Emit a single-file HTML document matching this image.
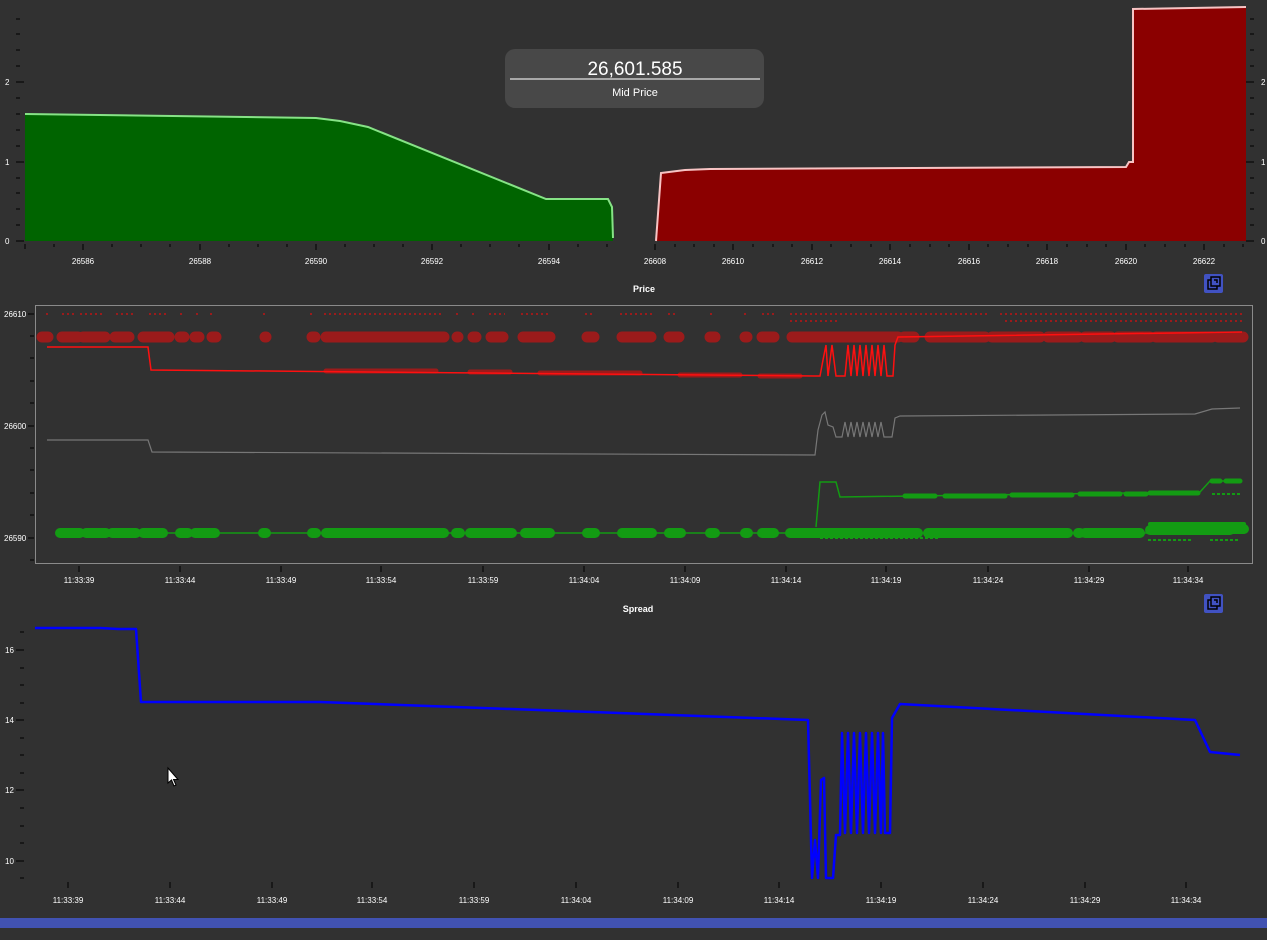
<!DOCTYPE html>
<html><head><meta charset="utf-8"><style>
html,body{margin:0;padding:0;background:#313131;overflow:hidden}
svg{display:block;font-family:"Liberation Sans",sans-serif}
</style></head><body>
<svg width="1267" height="940" viewBox="0 0 1267 940" xmlns="http://www.w3.org/2000/svg">
<defs>
<g id="icon">
<rect x="0" y="0" width="19" height="19" rx="2" fill="#4152c2"/>
<rect x="4" y="6" width="9" height="9" fill="none" stroke="#000" stroke-width="1.5"/>
<rect x="7" y="3" width="9" height="9" fill="#4152c2" stroke="#000" stroke-width="1.5"/>
<path d="M10 6h3v3" fill="none" stroke="#000" stroke-width="1.5"/>
</g>
</defs>
<rect width="1267" height="940" fill="#313131"/>

<!-- TOP DEPTH CHART -->
<g stroke="#000" stroke-width="1">
<path d="M16 241h8M16 225h4M16 209h4M16 193h4M16 178h4M16 162h8M16 146h4M16 130h4M16 114h4M16 98h4M16 82h8M16 66h4M16 50h4M16 34h4M16 19h4"/>
<path d="M1246 241h8M1250 225h4M1250 209h4M1250 193h4M1250 178h4M1246 162h8M1250 146h4M1250 130h4M1250 114h4M1250 98h4M1246 82h8M1250 66h4M1250 50h4M1250 34h4M1250 19h4"/>
</g>
<g fill="#fff" font-size="8">
<text x="5" y="244">0</text><text x="5" y="165">1</text><text x="5" y="85">2</text>
<text x="1261" y="244">0</text><text x="1261" y="165">1</text><text x="1261" y="85">2</text>
</g>
<path d="M25 241V114L316 118L340 121L368 127L546 199L608 199L612 207L613 241Z" fill="#006400"/>
<path d="M25 114L316 118L340 121L368 127L546 199L608 199L612 207L613 238" fill="none" stroke="#86e386" stroke-width="2"/>
<path d="M656 241L661 173L685 170L710 169L1126 167L1129 162L1133 162L1133 9L1246 7L1246 241Z" fill="#8b0000"/>
<path d="M656 241L661 173L685 170L710 169L1126 167L1129 162L1133 162L1133 9L1246 7" fill="none" stroke="#f7c4c4" stroke-width="2"/>
<g stroke="#000" stroke-width="1">
<path d="M25 244v5M54 244v3M83 244v6M112 244v3M141 244v3M170 244v3M200 244v6M229 244v3M258 244v3M287 244v3M316 244v6M345 244v3M374 244v3M403 244v3M432 244v6M461 244v3M490 244v3M519 244v3M549 244v6M578 244v3M607 244v3"/>
<path d="M655 244v6M675 244v3M694 244v3M714 244v3M733 244v6M753 244v3M773 244v3M792 244v3M812 244v6M831 244v3M851 244v3M871 244v3M890 244v6M910 244v3M930 244v3M949 244v3M969 244v6M988 244v3M1008 244v3M1028 244v3M1047 244v6M1067 244v3M1087 244v3M1106 244v3M1126 244v6M1145 244v3M1165 244v3M1185 244v3M1204 244v6M1224 244v3M1243 244v3"/>
</g>
<g fill="#fff" font-size="8" text-anchor="middle">
<text x="83" y="264">26586</text><text x="200" y="264">26588</text><text x="316" y="264">26590</text><text x="432" y="264">26592</text><text x="549" y="264">26594</text>
<text x="655" y="264">26608</text><text x="733" y="264">26610</text><text x="812" y="264">26612</text><text x="890" y="264">26614</text><text x="969" y="264">26616</text><text x="1047" y="264">26618</text><text x="1126" y="264">26620</text><text x="1204" y="264">26622</text>
</g>
<rect x="505" y="49" width="259" height="59" rx="10" fill="#484848"/>
<text x="635" y="75" fill="#fff" font-size="19" text-anchor="middle">26,601.585</text>
<path d="M510 79H760" stroke="#c8c8c8" stroke-width="1.5"/>
<text x="635" y="96" fill="#fff" font-size="11" text-anchor="middle">Mid Price</text>

<!-- PRICE CHART -->
<text x="644" y="292" fill="#fff" font-size="9" font-weight="bold" text-anchor="middle">Price</text>
<use href="#icon" x="1204" y="274"/>
<rect x="35.5" y="305.5" width="1217" height="258" fill="none" stroke="#8a8a8a" stroke-width="1"/>
<g stroke="#000" stroke-width="1">
<path d="M28 314h6M30 336h4M30 358h4M30 381h4M30 403h4M28 426h6M30 448h4M30 470h4M30 493h4M30 515h4M28 538h6M30 560h4"/>
<path d="M79 566v6M180 566v6M281 566v6M381 566v6M483 566v6M584 566v6M685 566v6M786 566v6M886 566v6M988 566v6M1089 566v6M1188 566v6"/>
</g>
<g fill="#fff" font-size="8">
<text x="4" y="317">26610</text><text x="4" y="429">26600</text><text x="4" y="541">26590</text>
</g>
<g fill="#fff" font-size="8" text-anchor="middle">
<text x="79" y="583">11:33:39</text><text x="180" y="583">11:33:44</text><text x="281" y="583">11:33:49</text><text x="381" y="583">11:33:54</text><text x="483" y="583">11:33:59</text><text x="584" y="583">11:34:04</text><text x="685" y="583">11:34:09</text><text x="786" y="583">11:34:14</text><text x="886" y="583">11:34:19</text><text x="988" y="583">11:34:24</text><text x="1089" y="583">11:34:29</text><text x="1188" y="583">11:34:34</text>
</g>
<!-- red top dashes -->
<g stroke="#9b1b1b" stroke-width="2" fill="none" stroke-dasharray="2 3">
<path d="M46 314h2M62 314h12M80 314h25M116 314h18M149 314h18M180 314h3M196 314h3M210 314h3M263 314h2M310 314h3M324 314h120M456 314h3M472 314h4M489 314h16M521 314h30M585 314h10M620 314h32M668 314h10M710 314h5M744 314h4M762 314h12M790 314h200M1000 314h245"/>
<path d="M1005 321h240M790 321h50"/>
</g>
<!-- red blobs -->
<g stroke="#9b1b1b" stroke-width="11" stroke-linecap="round" fill="none">
<path d="M42 337h6M62 337h16M83 337h22M115 337h14M143 337h26M180 337h4M195 337h4M212 337h4M265 337h1M312 337h3M326 337h118M457 337h1M473 337h3M491 337h12M523 337h27M587 337h7M622 337h29M669 337h10M710 337h5M745 337h2M762 337h12M792 337h106M904 337h10M930 337h55M992 337h48M1048 337h30M1085 337h26M1118 337h32M1156 337h56M1218 337h25"/>
</g>
<g stroke="#9b1b1b" stroke-width="5" stroke-linecap="round" fill="none">
<path d="M326 371h110M470 372h40M540 373h100M680 375h60M760 376h40"/>
</g>
<path d="M47 347H148L151 370L815 376L820 376L823 360L826 345L828 376L832 345L836 376L845 376L848 345L851 376L854 345L857 376L860 345L863 376L866 345L869 376L872 345L875 376L878 345L881 376L884 345L887 376L893 376L895 345L898 337L1242 332" fill="none" stroke="#ff1010" stroke-width="1.5"/>
<!-- gray mid -->
<path d="M47 440H148L152 452L815 455L818 430L822 415L825 412L828 425L833 427L836 437L842 437L845 422L848 437L851 422L854 437L857 422L860 437L863 422L866 437L869 422L872 437L875 422L878 437L881 422L884 437L892 437L895 418L900 416L1195 414L1212 409L1240 408" fill="none" stroke="#777" stroke-width="1.2"/>
<!-- green -->
<path d="M816 527L820 482L836 482L840 497L1200 492L1210 481L1240 481" fill="none" stroke="#139b13" stroke-width="1.5"/>
<g stroke="#139b13" stroke-width="5" stroke-linecap="round" fill="none">
<path d="M905 496h30M945 496h60M1012 495h60M1080 494h40M1126 494h20M1150 493h48M1212 481h8M1226 481h14"/>
</g>
<g stroke="#139b13" stroke-width="2" fill="none" stroke-dasharray="3 2">
<path d="M1148 540h45M1210 540h30M1212 494h30M820 538h120"/>
</g>
<path d="M58 533H1245" stroke="#139b13" stroke-width="1.5"/>
<g stroke="#139b13" stroke-width="10" stroke-linecap="round" fill="none">
<path d="M60 533h20M86 533h20M112 533h24M143 533h20M180 533h8M195 533h20M263 533h3M312 533h4M326 533h118M456 533h4M470 533h42M525 533h25M587 533h8M622 533h30M669 533h12M710 533h5M745 533h3M762 533h12M790 533h128M928 533h140M1078 533h2M1085 533h55M1150 530h80M1210 529h34"/>
</g>
<g stroke="#139b13" stroke-width="4" stroke-linecap="round" fill="none"><path d="M1150 524h80M1210 524h34"/></g>

<!-- SPREAD CHART -->
<text x="638" y="612" fill="#fff" font-size="9" font-weight="bold" text-anchor="middle">Spread</text>
<use href="#icon" x="1204" y="594"/>
<g stroke="#000" stroke-width="1">
<path d="M20 632h4M16 650h8M20 668h4M20 685h4M20 703h4M16 720h8M20 738h4M20 755h4M20 773h4M16 790h8M20 808h4M20 826h4M20 843h4M16 861h8M20 878h4"/>
<path d="M68 882v6M170 882v6M272 882v6M372 882v6M474 882v6M576 882v6M678 882v6M779 882v6M881 882v6M983 882v6M1085 882v6M1186 882v6"/>
</g>
<g fill="#fff" font-size="8">
<text x="5" y="653">16</text><text x="5" y="723">14</text><text x="5" y="793">12</text><text x="5" y="864">10</text>
</g>
<g fill="#fff" font-size="8" text-anchor="middle">
<text x="68" y="903">11:33:39</text><text x="170" y="903">11:33:44</text><text x="272" y="903">11:33:49</text><text x="372" y="903">11:33:54</text><text x="474" y="903">11:33:59</text><text x="576" y="903">11:34:04</text><text x="678" y="903">11:34:09</text><text x="779" y="903">11:34:14</text><text x="881" y="903">11:34:19</text><text x="983" y="903">11:34:24</text><text x="1085" y="903">11:34:29</text><text x="1186" y="903">11:34:34</text>
</g>
<path d="M35 628L100 628L118 629L136 629L141 702L320 702L808 720L812 878L815 840L818 878L821 780L824 778L826 878L833 878L836 835L840 835L842 733L845 833L848 733L851 833L854 733L857 833L860 733L863 833L866 733L869 833L872 733L875 833L878 733L881 833L883 733L885 833L890 833L892 718L900 704L1195 720L1210 752L1240 755" fill="none" stroke="#0000ff" stroke-width="2.5" stroke-linejoin="round"/>
<!-- cursor -->
<path d="M168 768L168 783L171.5 780L174 786L176 785L173.5 779.5L178 779.5Z" fill="#fff" stroke="#000" stroke-width="1"/>
<!-- bottom bar -->
<rect x="0" y="918" width="1267" height="10" fill="#4152b2"/>
</svg>
</body></html>
